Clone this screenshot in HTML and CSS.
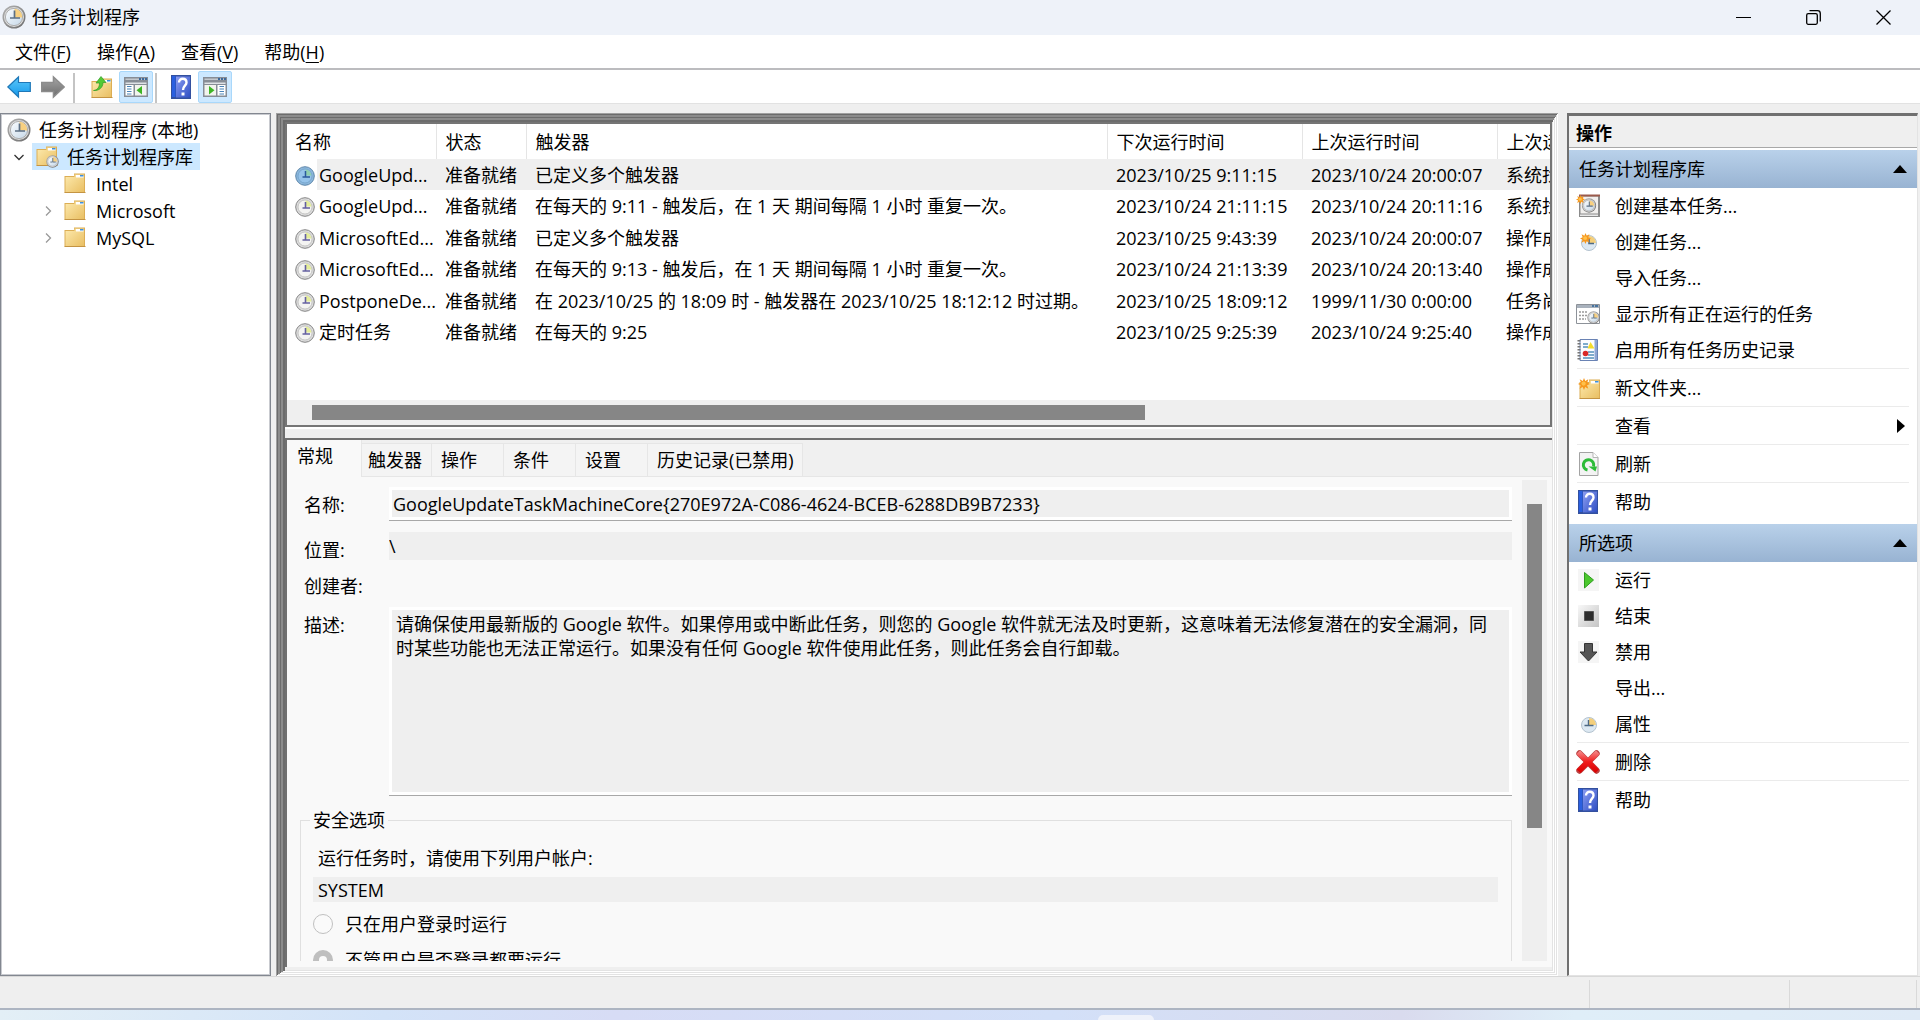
FILE: index.html
```html
<!DOCTYPE html>
<html lang="zh-CN">
<head>
<meta charset="utf-8">
<title>任务计划程序</title>
<link rel="stylesheet" href="styles.css">
</head>
<body>
<svg class="defs" width="0" height="0" aria-hidden="true">
  <defs>
    <linearGradient id="gRim" x1="0" y1="0" x2="1" y2="1"><stop offset="0" stop-color="#b4b4b4"/><stop offset="1" stop-color="#6a6a6a"/></linearGradient>
    <linearGradient id="gFace" x1="0" y1="0" x2="1" y2="1"><stop offset="0" stop-color="#fbfdff"/><stop offset="1" stop-color="#c6d8e8"/></linearGradient>
    <linearGradient id="gFolder" x1="0" y1="0" x2="1" y2="1"><stop offset="0" stop-color="#fdeaae"/><stop offset="1" stop-color="#e9bf63"/></linearGradient>
    <linearGradient id="gBlue" x1="0" y1="0" x2="0" y2="1"><stop offset="0" stop-color="#5cc8fa"/><stop offset="1" stop-color="#1598ea"/></linearGradient>
    <linearGradient id="gGray" x1="0" y1="0" x2="0" y2="1"><stop offset="0" stop-color="#a5a5a5"/><stop offset="1" stop-color="#6c6c6c"/></linearGradient>
    <linearGradient id="gBook" x1="0" y1="0" x2="1" y2="1"><stop offset="0" stop-color="#8b9df2"/><stop offset="1" stop-color="#2f4fc4"/></linearGradient>
    <linearGradient id="gRed" x1="0" y1="0" x2="0" y2="1"><stop offset="0" stop-color="#f59090"/><stop offset=".5" stop-color="#f01c1c"/><stop offset="1" stop-color="#d80000"/></linearGradient>
    <linearGradient id="gStop" x1="0" y1="0" x2="1" y2="1"><stop offset="0" stop-color="#f8f8f8"/><stop offset="1" stop-color="#c4c4c4"/></linearGradient>
    <symbol id="clock" viewBox="0 0 24 24">
      <circle cx="12" cy="12" r="11.500" fill="url(#gRim)"/><circle cx="12" cy="12" r="10" fill="#dedede"/><circle cx="12" cy="12" r="8.600" fill="url(#gFace)" stroke="#a0a0a0" stroke-width=".8"/>
      <path d="M12.500 11.500V3.800A8 8 0 0 1 20.200 12.500H12.500z" fill="#f8d080"/><path d="M12.500 5.500V13H18M8 13h4" stroke="#5c6f84" stroke-width="1.700" fill="none"/>
    </symbol>
    <symbol id="task" viewBox="0 0 20 20">
      <circle cx="10" cy="10" r="9.300" fill="#dcdcdc" stroke="#858585"/><circle cx="10" cy="10" r="7" fill="#f4f4f2" stroke="#b5b5b5" stroke-width=".7"/>
      <path d="M10.500 9.500V3.500A6.500 6.500 0 0 1 16.500 9.500z" fill="#e4ed9a"/><path d="M10.500 5V11H15M7.500 11h3" stroke="#6460a0" stroke-width="1.600" fill="none"/>
    </symbol>
    <symbol id="task-on" viewBox="0 0 20 20">
      <circle cx="10" cy="10" r="9.300" fill="#8bb7dc" stroke="#5f87aa"/><circle cx="10" cy="10" r="7" fill="#95c3ea" stroke="#6f9cc4" stroke-width=".7"/>
      <path d="M10.500 9.500V3.500A6.500 6.500 0 0 1 16.500 9.500z" fill="#8fcfae"/><path d="M10.500 5V11H15M7.500 11h3" stroke="#2a5a9c" stroke-width="1.500" fill="none"/>
    </symbol>
    <symbol id="folder" viewBox="0 0 24 24">
      <path d="M1.500 4h9.500V1.500h11V20.500h-20.500z" fill="#dcae55"/><path d="M2.500 5h9V2.500h9.500v17.500H2.500z" fill="url(#gFolder)"/><path d="M13 3h7.500v2.500h-7.500z" fill="#fff"/><path d="M17 3h3.500v1.500h-3.500z" fill="#3d8fdc"/><path d="M1.500 20h21v1h-21z" fill="#c49443"/>
    </symbol>
    <symbol id="star" viewBox="0 0 14 14"><path d="M7 0l1.500 3.500L12 1.500 10.800 5.300 14 7l-3.400 1.500L12 12.500 8.400 10.600 7 14 5.400 10.600 1.800 12.400 3.300 8.600 0 7 3.400 5.300 2 1.500 5.600 3.500z" fill="#f7981d"/><circle cx="6.500" cy="6.500" r="2.500" fill="#ffc14a"/></symbol>
    <symbol id="book" viewBox="0 0 20 24">
      <path d="M0 0h20v24H0z" fill="#33509f"/><path d="M1 1h3.500v21H1z" fill="#2a5fe0"/><path d="M5 1.500h14v21H5z" fill="url(#gBook)"/>
      <path d="M8 7.500C8 2.500 15.500 2.500 15.500 7.500C15.500 10.500 12 11 12 15" fill="none" stroke="#fff" stroke-width="2.400"/><path d="M10.500 17.500h3v3h-3z" fill="#fff"/>
    </symbol>
    <symbol id="panel" viewBox="0 0 24 20">
      <path d="M0 0h24v20H0z" fill="#878d96"/><path d="M1.500 1.500h21V3h-21z" fill="#c3c8ce"/><path d="M15 1h2v2h-2zM18 1h2v2h-2zM21 1h2v2h-2z" fill="#3d6a9c"/><path d="M1.500 5.500h21v1.500h-21z" fill="#dfe2e6"/>
    </symbol>
  </defs>
</svg>

<header class="titlebar">
  <svg class="i24"><use href="#clock"/></svg>
  <h1>任务计划程序</h1>
  <div class="winctl">
    <button aria-label="最小化"><svg width="15" height="15" viewBox="0 0 15 15"><path d="M0 7.500h15" stroke="#000" fill="none"/></svg></button>
    <button aria-label="还原"><svg width="15" height="15" viewBox="0 0 15 15"><rect x=".7" y="3.700" width="10.600" height="10.600" rx="1.500" fill="none" stroke="#000" stroke-width="1.300"/><path d="M3.500.7H11.500A2.800 2.800 0 0 1 14.300 3.500V11.500" fill="none" stroke="#000" stroke-width="1.300"/></svg></button>
    <button aria-label="关闭"><svg width="15" height="15" viewBox="0 0 15 15"><path d="M.5.5l14 14M14.500.5l-14 14" stroke="#000" stroke-width="1.300" fill="none"/></svg></button>
  </div>
</header>

<nav class="menubar">
  <button>文件(<u>F</u>)</button><button>操作(<u>A</u>)</button><button>查看(<u>V</u>)</button><button>帮助(<u>H</u>)</button>
</nav>

<div class="toolbar">
  <button aria-label="后退"><svg class="i24" viewBox="0 0 24 24"><path d="M.8 12L11.500 2v5.500H23.300v9H11.500V22z" fill="url(#gBlue)" stroke="#1f78b8" stroke-width="1.200"/></svg></button>
  <button aria-label="前进"><svg class="i24" viewBox="0 0 24 24"><path d="M23.200 12L12.500 2v5.500H.7v9H12.500V22z" fill="url(#gGray)" stroke="#8c8c8c" stroke-width="1.600"/></svg></button>
  <i class="tsep"></i>
  <button aria-label="上移一级"><svg class="i24" viewBox="0 0 24 24"><use href="#folder" y="2"/><path d="M3.500 15.500C8 15 9.500 11.500 9.500 8H6L11 1.500 16 7.500H13C13 12.500 9 16 3.500 15.500z" fill="#52c936" stroke="#2f9a22" stroke-width=".7"/></svg></button>
  <button class="on" aria-label="显示/隐藏控制台树"><svg width="24" height="20" viewBox="0 0 24 20"><use href="#panel"/><path d="M1.500 8h8v10.500h-8z" fill="#fff"/><path d="M3 9.500h4.500M3 12h4.500M3 14.500h4.500M3 17h4.500" stroke="#4a83b8" stroke-width="1.200"/><path d="M11 8h11.500v10.500H11z" fill="#f2f4ee"/><path d="M18 9v8.500L12.500 13.200z" fill="#3db524"/></svg></button>
  <i class="tsep"></i>
  <button aria-label="帮助"><svg width="20" height="24"><use href="#book"/></svg></button>
  <button class="on" aria-label="显示/隐藏操作窗格"><svg width="24" height="20" viewBox="0 0 24 20"><use href="#panel"/><path d="M14.500 8h8v10.500h-8z" fill="#fff"/><path d="M16.500 9.500H21M16.500 12H21M16.500 14.500H21M16.500 17H21" stroke="#4a83b8" stroke-width="1.200"/><path d="M1.500 8H13v10.500H1.500z" fill="#f2f4ee"/><path d="M6 9v8.500l5.500-4.300z" fill="#3db524"/></svg></button>
</div>

<main class="work">
  <aside class="tree">
    <ul>
      <li class="node root"><svg class="i24"><use href="#clock"/></svg><span>任务计划程序 (本地)</span></li>
      <li class="node lib"><svg class="chev" viewBox="0 0 12 12"><path d="M1.500 4L6 8.500 10.500 4" stroke="#333"/></svg><span class="sel"><svg class="i24" viewBox="0 0 24 24"><use href="#folder"/><use href="#clock" x="11" y="10" width="13" height="13"/></svg>任务计划程序库</span></li>
      <li class="node sub"><i class="chev"></i><svg class="i24"><use href="#folder"/></svg><span>Intel</span></li>
      <li class="node sub"><svg class="chev" viewBox="0 0 12 12"><path d="M4 1.500L8.500 6 4 10.500" stroke="#999"/></svg><svg class="i24"><use href="#folder"/></svg><span>Microsoft</span></li>
      <li class="node sub"><svg class="chev" viewBox="0 0 12 12"><path d="M4 1.500L8.500 6 4 10.500" stroke="#999"/></svg><svg class="i24"><use href="#folder"/></svg><span>MySQL</span></li>
    </ul>
  </aside>

  <section class="center">
    <div class="list">
      <div class="listview">
        <table>
          <colgroup><col class="c-name"><col class="c-state"><col class="c-trig"><col class="c-time"><col class="c-time"><col></colgroup>
          <thead><tr><th>名称</th><th>状态</th><th>触发器</th><th>下次运行时间</th><th>上次运行时间</th><th>上次运</th></tr></thead>
          <tbody>
            <tr class="picked"><td><svg class="i20"><use href="#task-on"/></svg>GoogleUpd...</td><td>准备就绪</td><td>已定义多个触发器</td><td>2023/10/25 9:11:15</td><td>2023/10/24 20:00:07</td><td>系统找</td></tr>
            <tr><td><svg class="i20"><use href="#task"/></svg>GoogleUpd...</td><td>准备就绪</td><td>在每天的 9:11 - 触发后，在 1 天 期间每隔 1 小时 重复一次。</td><td>2023/10/24 21:11:15</td><td>2023/10/24 20:11:16</td><td>系统找</td></tr>
            <tr><td><svg class="i20"><use href="#task"/></svg>MicrosoftEd...</td><td>准备就绪</td><td>已定义多个触发器</td><td>2023/10/25 9:43:39</td><td>2023/10/24 20:00:07</td><td>操作成</td></tr>
            <tr><td><svg class="i20"><use href="#task"/></svg>MicrosoftEd...</td><td>准备就绪</td><td>在每天的 9:13 - 触发后，在 1 天 期间每隔 1 小时 重复一次。</td><td>2023/10/24 21:13:39</td><td>2023/10/24 20:13:40</td><td>操作成</td></tr>
            <tr><td><svg class="i20"><use href="#task"/></svg>PostponeDe...</td><td>准备就绪</td><td>在 2023/10/25 的 18:09 时 - 触发器在 2023/10/25 18:12:12 时过期。</td><td>2023/10/25 18:09:12</td><td>1999/11/30 0:00:00</td><td>任务尚</td></tr>
            <tr><td><svg class="i20"><use href="#task"/></svg>定时任务</td><td>准备就绪</td><td>在每天的 9:25</td><td>2023/10/25 9:25:39</td><td>2023/10/24 9:25:40</td><td>操作成</td></tr>
          </tbody>
        </table>
      </div>
      <div class="hbar"><div class="hthumb"></div></div>
    </div>

    <div class="detail">
      <div class="tabs" role="tablist">
        <button role="tab" class="tab active" aria-selected="true">常规</button><button role="tab" class="tab wide">触发器</button><button role="tab" class="tab">操作</button><button role="tab" class="tab">条件</button><button role="tab" class="tab">设置</button><button role="tab" class="tab long">历史记录(已禁用)</button>
      </div>
      <div class="page">
        <form class="general">
          <div class="fields">
            <label for="f-name">名称:</label><input id="f-name" class="boxed" readonly value="GoogleUpdateTaskMachineCore{270E972A-C086-4624-BCEB-6288DB9B7233}">
            <label for="f-loc">位置:</label><input id="f-loc" class="flat" readonly value="\">
            <label for="f-auth">创建者:</label><output id="f-auth"></output>
            <label for="f-desc">描述:</label><textarea id="f-desc" class="boxed" readonly>请确保使用最新版的 Google 软件。如果停用或中断此任务，则您的 Google 软件就无法及时更新，这意味着无法修复潜在的安全漏洞，同时某些功能也无法正常运行。如果没有任何 Google 软件使用此任务，则此任务会自行卸载。</textarea>
          </div>
          <fieldset>
            <legend>安全选项</legend>
            <label class="acct" for="f-user">运行任务时，请使用下列用户帐户:</label>
            <input id="f-user" class="flat user" readonly value="SYSTEM">
            <label class="opt"><input type="radio" name="logon" disabled>只在用户登录时运行</label>
            <label class="opt"><input type="radio" name="logon" disabled checked>不管用户是否登录都要运行</label>
          </fieldset>
        </form>
        <div class="vbar"><div class="vthumb"></div></div>
      </div>
    </div>
  </section>

  <aside class="actions">
    <h2>操作</h2>
    <section>
      <h3><span>任务计划程序库</span><svg width="14" height="8" viewBox="0 0 14 8"><path d="M7 0l7 8H0z"/></svg></h3>
      <button><svg class="i24" viewBox="0 0 24 24"><path d="M3 1h21v22H3z" fill="#8b8b8b"/><path d="M4.500 2.500h17.500v17H4.500z" fill="#f1efed"/><path d="M3 .5h21v2H3z" fill="#9b5a4c"/><path d="M4 20.500h18V22H4z" fill="#e8e8e8"/><use href="#clock" x="5.500" y="4" width="15" height="15"/><use href="#star" x="0" y="1" width="9" height="9"/></svg>创建基本任务...</button>
      <button><svg class="i24" viewBox="0 0 24 24"><circle cx="13" cy="13" r="7.500" fill="#dce8f2" stroke="#b4c3cf"/><path d="M13 13V6a7 7 0 0 1 7 7z" fill="#f4cf7b"/><path d="M13 8v5.500h5" fill="none" stroke="#4e6a85" stroke-width="1.600"/><use href="#star" x="4" y="3" width="11" height="11"/></svg>创建任务...</button>
      <button><i class="i24"></i>导入任务...</button>
      <button><svg class="i24" viewBox="0 0 24 24"><path d="M.5 2.500h23v19H.5z" fill="#fff" stroke="#8d9299"/><path d="M1 3h22v3H1z" fill="#a9b2bd"/><path d="M16 3h2v2h-2zM19 3h3v2h-3z" fill="#47749f"/><path d="M3 10h9M3 13.500h8M3 17h7" stroke="#9a9a9a" stroke-width="1.400" stroke-dasharray="2 1"/><use href="#clock" x="11" y="9" width="13" height="13"/></svg>显示所有正在运行的任务</button>
      <button><svg class="i24" viewBox="0 0 24 24"><path d="M4 1.500h17.500v21H4z" fill="#fbfcff" stroke="#6a83b4"/><path d="M18.500 2H21v20h-2.500z" fill="#8fa6d4"/><path d="M3 2v21" stroke="#777" stroke-width="3" stroke-dasharray="1.500 1.500"/><path d="M7 6h5M7 9h5M12 14h6M12 17h6M7 20h11" stroke="#5590bc" stroke-width="1.300"/><path d="M14.500 4l4 6.500h-7z" fill="#f4dc2c"/><circle cx="9.500" cy="15.500" r="2.800" fill="#d92828"/></svg>启用所有任务历史记录</button>
      <hr>
      <button><svg class="i24" viewBox="0 0 24 24"><use href="#folder" x="2" y="2"/><use href="#star" x="2" y="2" width="12" height="12"/></svg>新文件夹...</button>
      <hr>
      <button><i class="i24"></i>查看<svg class="more" width="8" height="14" viewBox="0 0 8 14"><path d="M0 0l8 7-8 7z"/></svg></button>
      <hr>
      <button><svg class="i24" viewBox="0 0 24 24"><path d="M3.500.5H17l5 5v18H3.500z" fill="#f3f3f3" stroke="#a3a3a3"/><path d="M17 .5v5h5" fill="#fff" stroke="#b5b5b5"/><path d="M11.500 18A5.200 5.200 0 1 1 17.500 14.500" fill="none" stroke="#2dbb38" stroke-width="3"/><path d="M12.500 14.500H21L19.500 19.500z" fill="#2dbb38"/></svg>刷新</button>
      <hr>
      <button><svg class="i24" viewBox="0 0 24 24"><use href="#book" x="2" width="20" height="24"/></svg>帮助</button>
    </section>
    <section>
      <h3><span>所选项</span><svg width="14" height="8" viewBox="0 0 14 8"><path d="M7 0l7 8H0z"/></svg></h3>
      <button><svg class="i24" viewBox="0 0 24 24"><path d="M2 1h21v22H2z" fill="#f5f5f5"/><path d="M8.500 4.500l9 7.500-9 8z" fill="#4cc82e" stroke="#2e9d1e"/></svg>运行</button>
      <button><svg class="i24" viewBox="0 0 24 24"><path d="M2 1h21v22H2z" fill="url(#gStop)"/><path d="M8.500 7.500h9v9h-9z" fill="#2d2d2d" stroke="#555"/></svg>结束</button>
      <button><svg class="i24" viewBox="0 0 24 24"><path d="M2 1h21v22H2z" fill="#f5f5f5"/><path d="M8.500 3.500h8v8.500h4.500L12.500 21 4 12h4.500z" fill="#555" stroke="#343434"/></svg>禁用</button>
      <button><i class="i24"></i>导出...</button>
      <button><svg class="i24" viewBox="0 0 24 24"><circle cx="13" cy="13" r="7.500" fill="#dce8f2" stroke="#b4c3cf"/><path d="M13 13V6a7 7 0 0 1 7 7z" fill="#f4cf7b"/><path d="M12.500 8v5.500h5M8.500 13.500h4" fill="none" stroke="#4e6a85" stroke-width="1.400"/></svg>属性</button>
      <hr>
      <button><svg class="i24" viewBox="0 0 24 24"><path d="M3.500 3.500L20.500 20.500M20.500 3.500L3.500 20.500" fill="none" stroke="#b44" stroke-width="6.400" stroke-linecap="round"/><path d="M.5 4L4 .5 12 8 20 .5 23.500 4 16 12l7 7.500L19.500 23 12 15.500 4.500 23 .5 19.500 8 12z" fill="url(#gRed)"/></svg>删除</button>
      <hr>
      <button><svg class="i24" viewBox="0 0 24 24"><use href="#book" x="2" width="20" height="24"/></svg>帮助</button>
    </section>
  </aside>
</main>

<footer class="status"><i></i><i></i><i></i></footer>
<div class="desktop"><i></i></div>
</body>
</html>
```
FILE: styles.css
```css
* { box-sizing: border-box; }
body {
  margin: 0;
  height: 100vh;
  display: flex;
  flex-direction: column;
  overflow: hidden;
  background: #efefef;
  color: #000;
  font: 18px/24px "Open Sans", "Noto Sans CJK SC", sans-serif;
}
button, input, textarea { font: inherit; color: inherit; margin: 0; padding: 0; border: 0; background: none; border-radius: 0; outline: 0; }
h1, h2, h3, ul { margin: 0; padding: 0; font: inherit; list-style: none; }
svg { display: block; flex: none; }
.defs { position: absolute; }
.i24 { width: 24px; height: 24px; flex: none; }
.i20 { width: 20px; height: 20px; }

.titlebar { display: flex; align-items: center; height: 35px; padding: 0 2px 1px; gap: 6px; background: #eef2f9; }
.winctl { display: flex; margin-left: auto; }
.winctl button { width: 70px; height: 34px; display: flex; align-items: center; justify-content: center; }

.menubar { display: flex; gap: 26px; height: 35px; padding: 0 15px; background: #fff; border-bottom: 2px solid #bcbcbf; }
.menubar u { text-underline-offset: 3px; text-decoration-thickness: 1px; }

.toolbar { display: flex; height: 34px; padding: 1px 2px 0; background: #fff; border-bottom: 1px solid #e2e2e2; }
.toolbar button { width: 34px; display: flex; align-items: center; justify-content: center; }
.toolbar .on { background: #cce8ff; border: 1px solid #a9d8fb; border-radius: 2px; }
.tsep { width: 2px; margin: 2px 10px 0 3px; background: #c4c4c4; }
.toolbar .on + .tsep { margin-left: 2px; margin-right: 7px; }

.work { flex: 1; min-height: 0; display: grid; grid-template-columns: 271px minmax(0, 1fr) 351px; column-gap: 5px; padding: 9px 2px 0 0; }
.tree { background: #fff; border: 1px solid #828790; box-shadow: inset 0 0 0 1px #c9cbd0; padding: 2px 0 0 6px; }
.node { display: flex; align-items: center; height: 27px; gap: 8px; white-space: nowrap; }
.chev { width: 12px; height: 12px; fill: none; stroke-width: 1.3; flex: none; }
.lib { gap: 7px; padding-left: 6px; }
.sel { display: flex; align-items: center; gap: 8px; height: 27px; padding: 0 7px 0 3px; background: #cce8ff; }
.sub { padding-left: 35px; gap: 9px; }

.center {
  display: flex; flex-direction: column; min-height: 0; margin-right: 4px; padding: 9px 6px 9px 9px;
  background: #efefef;
  box-shadow:
    inset 1px 1px #a0a0a0, inset -1px -1px #fff,
    inset 2px 2px #6c6c6c, inset -2px -2px #e3e3e3,
    inset 4px 4px #8c8c8c, inset -3px -3px #fff,
    inset 5px 5px #6c6c6c, inset -4px -4px #e3e3e3,
    inset 7px 7px #8c8c8c, inset -5px -5px #fff,
    inset 9px 9px #6c6c6c, inset -6px -6px #e3e3e3;
}
.list { height: 305px; flex: none; display: flex; flex-direction: column; border: 2px solid #757575; background: #fff; }
.listview { flex: 1; min-height: 0; overflow: hidden; }
table { width: 100%; table-layout: fixed; border-collapse: collapse; }
.c-name { width: 149px; }
.c-state { width: 90px; }
.c-trig { width: 581px; }
.c-time { width: 195px; }
th, td { padding: 0 0 0 9px; text-align: left; font-weight: normal; white-space: nowrap; overflow: hidden; }
th:first-child, td:first-child { padding-left: 8px; }
th { height: 35px; border-right: 1px solid #e5e5e5; }
th:last-child { border-right: 0; }
td { height: 31px; }
tr:nth-child(even) td { height: 32px; }
td svg { display: inline-block; vertical-align: -4px; margin-right: 4px; }
.picked { background: linear-gradient(to right, #fff 30px, #efefef 30px); }
.hbar { height: 25px; padding: 5px 0 5px 25px; background: #efefef; }
.hthumb { width: 67.3%; height: 15px; background: #868686; }

.detail { flex: 1; min-height: 0; display: flex; flex-direction: column; margin-top: 11px; padding-bottom: 6px; border-top: 2px solid #707070; border-left: 2px solid #707070; background: #f9f9f9; box-shadow: 0 -9px #efefef, 0 -11px #fff; }
.tabs { display: flex; align-items: flex-end; height: 37px; background: #f0f0f0; box-shadow: inset 0 -1px #e6e6e6; }
.tab { width: 72px; height: 34px; padding: 0 9px; text-align: left; white-space: nowrap; background: #f4f4f4; border: 1px solid #e6e6e6; border-left: 0; }
.tab.active { width: 75px; height: 37px; padding: 0 10px 5px; background: #f9f9f9; border-width: 0 1px 0 0; }
.tab.wide { width: 70px; padding: 0 6px; }
.tab.long { width: 155px; }
.page { flex: 1; min-height: 0; display: flex; padding-right: 5px; }
.general { flex: 1; min-width: 0; overflow: hidden; padding: 10px 10px 0 13px; }
.fields { display: grid; grid-template-columns: 89px minmax(0, 1fr); grid-template-rows: 45px 36px 39px 188px; align-items: start; }
.fields label { padding-left: 4px; line-height: 36px; }
.boxed { width: 100%; height: 33px; padding: 0 1px; background: #efefef; border: 3px solid #fff; box-shadow: 0 1px #a8a8a8; }
textarea.boxed { height: 188px; padding: 2px 4px; resize: none; overflow: hidden; display: block; }
.flat { width: 100%; height: 28px; background: #efefef; }
fieldset { min-width: 0; margin: 13px 0 0; padding: 0 13px 20px 12px; border: 1px solid #e0e0e0; }
legend { padding: 0 3px; margin-left: -3px; }
.acct { display: block; margin: 14px 0 7px; padding-left: 5px; }
.user { display: block; height: 25px; padding-left: 5px; margin-bottom: 4px; }
.opt { display: flex; align-items: center; gap: 12px; height: 36px; }
.opt input { appearance: none; width: 20px; height: 20px; border: 1px solid #c0c0c0; border-radius: 50%; background: #fafafa; }
.opt input:checked { border: 6px solid #bfbfbf; }
.vbar { width: 25px; padding: 24px 5px 0; background: #efefef; margin-top: 3px; }
.vthumb { height: 71%; background: #868686; }

.actions { min-height: 0; overflow: hidden; background: #fff; border: solid #e3e3e3; border-width: 3px 1px 1px 2px; border-top-color: #707070; border-left-color: #707070; }
.actions h2 { height: 32px; padding: 0 7px; line-height: 34px; font-weight: bold; background: #efefef; border-bottom: 1px solid #a8a8a8; margin-bottom: 2px; }
.actions h3 { display: flex; align-items: center; justify-content: space-between; height: 38px; padding: 0 10px; background: linear-gradient(#b9d1ea, #98b3d2); }
.actions button { display: flex; align-items: center; gap: 15px; width: 100%; height: 36px; padding: 0 12px 0 7px; text-align: left; }
.actions .more { margin-left: auto; }
.actions hr { height: 1px; margin: 0 8px 1px; border: 0; background: #ebebeb; }
.actions section + section { margin-top: 4px; }

.status { display: flex; justify-content: flex-end; height: 34px; padding: 3px 3px 0 0; border-top: 1px solid #d8d8d8; border-bottom: 2px solid #adb5c2; }
.status i { border-left: 1px solid #d9d9d9; width: 200px; }
.status i:nth-child(2) { width: 127px; }
.status i:nth-child(3) { width: 1px; }
.desktop { height: 10px; display: flex; align-items: flex-end; justify-content: center; background: linear-gradient(to right, #e3eff6, #d3e3f8 20%, #d7dcf5 32%, #d3e0f8 55%, #d9dbee 73%, #dfeef8 82%, #dfeaf6); }
.desktop i { width: 56px; height: 5px; margin-left: 332px; border-radius: 5px 5px 0 0; background: #eff2fa; }
```
